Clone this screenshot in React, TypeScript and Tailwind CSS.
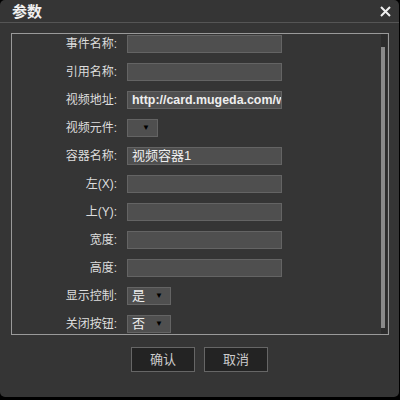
import React from 'react';

const cjk = { fontFamily: '"Liberation Sans", "Noto Sans CJK SC", sans-serif' };

const TextField: React.FC<{ value?: string; bold?: boolean }> = ({ value, bold }) => (
  <div
    className={`w-[155px] h-[18px] bg-[#4f4f4f] border border-[#646464] overflow-hidden whitespace-nowrap pl-[4px] leading-[16px] text-[#eeeeee] ${bold ? 'font-bold text-[12.4px]' : 'text-[13px]'}`}
  >
    {value}
  </div>
);

const SelectField: React.FC<{ value?: string; width: string }> = ({ value, width }) => (
  <div
    className={`${width} h-[18px] bg-[#4f4f4f] border border-[#646464] flex items-center justify-between pl-[4px] pr-[7px] text-[13px] leading-[16px] text-[#eeeeee]`}
  >
    <span>{value}</span>
    <span className="text-[8px] text-black">▼</span>
  </div>
);

const rows: { label: string; field: React.ReactNode }[] = [
  { label: '事件名称:', field: <TextField /> },
  { label: '引用名称:', field: <TextField /> },
  { label: '视频地址:', field: <TextField value="http://card.mugeda.com/w" bold /> },
  { label: '视频元件:', field: <SelectField width="w-[31px]" /> },
  { label: '容器名称:', field: <TextField value="视频容器1" /> },
  { label: '左(X):', field: <TextField /> },
  { label: '上(Y):', field: <TextField /> },
  { label: '宽度:', field: <TextField /> },
  { label: '高度:', field: <TextField /> },
  { label: '显示控制:', field: <SelectField width="w-[44px]" value="是" /> },
  { label: '关闭按钮:', field: <SelectField width="w-[44px]" value="否" /> },
];

export default function App() {
  return (
    <div className="w-[400px] h-[400px] bg-black" style={cjk}>
      <div className="w-[399px] h-[397px] bg-[#353535] rounded-[5px] flex flex-col">
        <div className="h-[23px] border-b border-[#555555] flex items-center justify-between pl-[12px] pr-[8px]">
          <span className="text-[15px] font-bold text-[#f0f0f0] leading-none">参数</span>
          <svg width="11" height="11" viewBox="0 0 11 11">
            <path d="M1 1 L10 10 M10 1 L1 10" stroke="#f0f0f0" strokeWidth="2" />
          </svg>
        </div>

        <div className="mt-[10px] ml-[11px] w-[378px] h-[302px] border border-[#9a9a9a] flex">
          <div className="flex-1 overflow-hidden pt-[1px] flex flex-col gap-[10px]">
            {rows.map((r) => (
              <div key={r.label} className="flex items-center shrink-0">
                <div className="w-[106px] text-right text-[12px] text-[#dddddd] pr-[1px]">{r.label}</div>
                <div className="ml-[9px]">{r.field}</div>
              </div>
            ))}
          </div>
          <div className="w-[6px] bg-[#2c2c2c] flex flex-col pt-[13px] pb-[6px] mr-[1px]">
            <div className="flex-1 w-[4px] bg-[#8a8a8a]" />
          </div>
        </div>

        <div className="flex justify-center gap-[9px] mt-[12px]">
          <div className="w-[64px] h-[25px] bg-[#232323] border border-[#666666] flex items-center justify-center text-[13px] text-[#cccccc]">
            确认
          </div>
          <div className="w-[64px] h-[25px] bg-[#232323] border border-[#666666] flex items-center justify-center text-[13px] text-[#cccccc]">
            取消
          </div>
        </div>
      </div>
    </div>
  );
}
